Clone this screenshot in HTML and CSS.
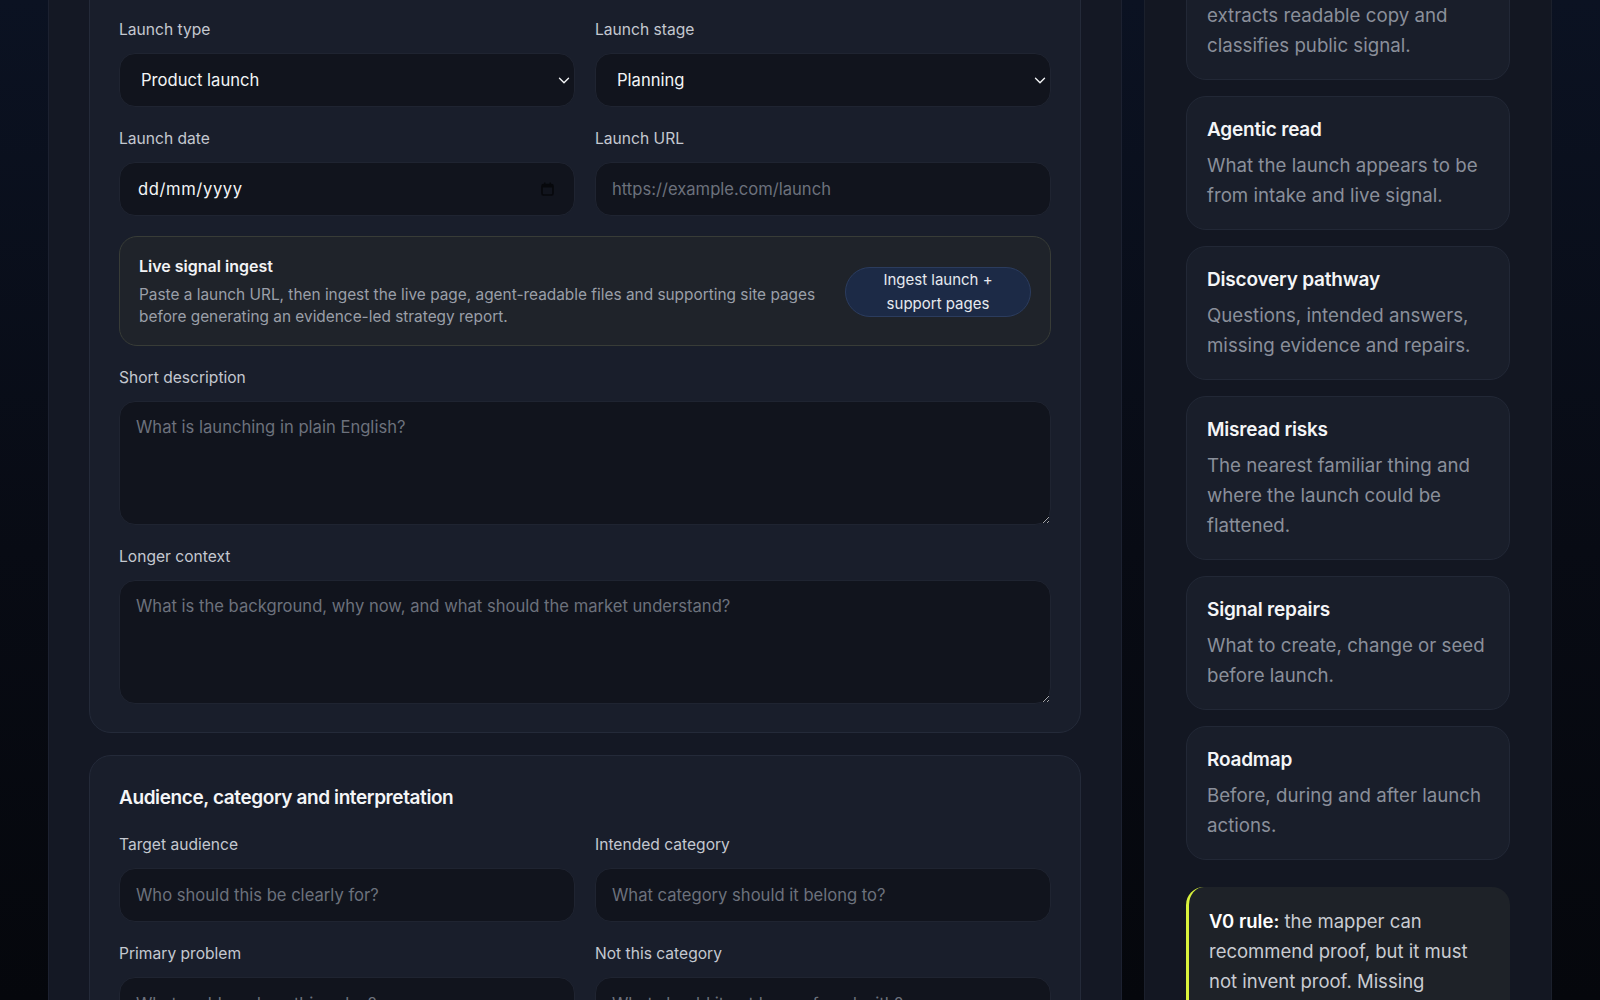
FILE: index.html
```html
<!DOCTYPE html>
<html lang="en">
<head>
  <meta charset="UTF-8">
  <meta name="viewport" content="width=device-width, initial-scale=1.0">
  <title>Launch Signal Mapper</title>
  <link rel="stylesheet" href="styles.css">
</head>
<body>
  <div class="shell">
    <main class="main-panel">
      <!-- Launch basics -->
      <section class="card">
        <h2 class="card-title">Launch basics</h2>
        <div class="form-grid">
          <div class="field">
            <label for="launchType">Launch type</label>
            <div class="select-wrap">
              <select id="launchType" class="control">
                <option>Product launch</option>
                <option>Feature launch</option>
                <option>Company launch</option>
              </select>
              <svg class="chevron" width="12" height="7" viewBox="0 0 12 7"><path d="M1.5 1.2l4.5 4.5 4.5-4.5" fill="none" stroke="#f3f4f6" stroke-width="1.4" stroke-linecap="round" stroke-linejoin="round"/></svg>
            </div>
          </div>
          <div class="field">
            <label for="launchStage">Launch stage</label>
            <div class="select-wrap">
              <select id="launchStage" class="control">
                <option>Planning</option>
                <option>Pre-launch</option>
                <option>Live</option>
              </select>
              <svg class="chevron" width="12" height="7" viewBox="0 0 12 7"><path d="M1.5 1.2l4.5 4.5 4.5-4.5" fill="none" stroke="#f3f4f6" stroke-width="1.4" stroke-linecap="round" stroke-linejoin="round"/></svg>
            </div>
          </div>
          <div class="field">
            <label for="launchDate">Launch date</label>
            <div class="select-wrap">
              <input id="launchDate" class="control date" type="text" value="dd/mm/yyyy">
              <svg class="calendar" width="13" height="14" viewBox="0 0 13 14"><rect x="1" y="2.5" width="11" height="10.5" rx="1.5" fill="none" stroke="#07080c" stroke-width="1.6"/><rect x="1" y="2.5" width="11" height="3" fill="#07080c"/><rect x="3" y="0.5" width="1.5" height="3" fill="#07080c"/><rect x="8.5" y="0.5" width="1.5" height="3" fill="#07080c"/></svg>
            </div>
          </div>
          <div class="field">
            <label for="launchUrl">Launch URL</label>
            <input id="launchUrl" class="control" type="url" placeholder="https://example.com/launch">
          </div>
        </div>

        <div class="ingest">
          <div class="ingest-text">
            <h3>Live signal ingest</h3>
            <p>Paste a launch URL, then ingest the live page, agent-readable files and supporting site pages before generating an evidence-led strategy report.</p>
          </div>
          <button class="ingest-btn">Ingest launch + support pages</button>
        </div>

        <div class="field">
          <label for="shortDesc">Short description</label>
          <textarea id="shortDesc" class="control" placeholder="What is launching in plain English?"></textarea>
        </div>
        <div class="field">
          <label for="longContext">Longer context</label>
          <textarea id="longContext" class="control" placeholder="What is the background, why now, and what should the market understand?"></textarea>
        </div>
      </section>

      <!-- Audience -->
      <section class="card">
        <h2 class="card-title">Audience, category and interpretation</h2>
        <div class="form-grid">
          <div class="field">
            <label for="audience">Target audience</label>
            <input id="audience" class="control" type="text" placeholder="Who should this be clearly for?">
          </div>
          <div class="field">
            <label for="category">Intended category</label>
            <input id="category" class="control" type="text" placeholder="What category should it belong to?">
          </div>
          <div class="field">
            <label for="problem">Primary problem</label>
            <input id="problem" class="control" type="text" placeholder="What problem does this solve?">
          </div>
          <div class="field">
            <label for="notCategory">Not this category</label>
            <input id="notCategory" class="control" type="text" placeholder="What should it not be confused with?">
          </div>
        </div>
      </section>
    </main>

    <aside class="side-panel">
      <div class="step-card">
        <h3>Live signal</h3>
        <p>Ingests the live launch page, extracts readable copy and classifies public signal.</p>
      </div>
      <div class="step-card">
        <h3>Agentic read</h3>
        <p>What the launch appears to be from intake and live signal.</p>
      </div>
      <div class="step-card">
        <h3>Discovery pathway</h3>
        <p>Questions, intended answers, missing evidence and repairs.</p>
      </div>
      <div class="step-card">
        <h3>Misread risks</h3>
        <p>The nearest familiar thing and where the launch could be flattened.</p>
      </div>
      <div class="step-card">
        <h3>Signal repairs</h3>
        <p>What to create, change or seed before launch.</p>
      </div>
      <div class="step-card">
        <h3>Roadmap</h3>
        <p>Before, during and after launch actions.</p>
      </div>
      <p class="rule-note"><strong>V0 rule:</strong> the mapper can recommend proof, but it must not invent proof. Missing evidence stays marked as a gap.</p>
    </aside>
  </div>
</body>
</html>
```

FILE: styles.css
```css
/* Page layout */
* {
  box-sizing: border-box;
}

html, body {
  height: 100%;
}

body {
  margin: 0;
  overflow: hidden;
  background: linear-gradient(180deg, #0b1222 0%, #080b14 55%, #05070c 100%);
  font-family: Inter, "Noto Sans", sans-serif;
  color: #e8eaee;
}

.shell {
  display: grid;
  grid-template-columns: 1074px 408px;
  column-gap: 22px;
  padding: 0 48px;
  margin-top: -100px;
  min-height: 1140px;
}

/* Main column */
.main-panel {
  background-color: #141824;
  border-left: 1px solid #1c2130;
  border-right: 1px solid #1c2130;
  padding: 40px;
  display: flex;
  flex-direction: column;
  gap: 22px;
}

.card {
  background-color: #191e2b;
  border: 1px solid #242a39;
  border-radius: 22px;
  padding: 28px 29px;
  display: flex;
  flex-direction: column;
  gap: 20px;
}

.card-title {
  margin: 1px 0 2px;
  font-size: 19px;
  line-height: 26px;
  font-weight: 600;
  letter-spacing: -0.4px;
  color: #f4f5f7;
}

.form-grid {
  display: grid;
  grid-template-columns: 1fr 1fr;
  gap: 20px;
}

.field label {
  display: block;
  font-size: 15.6px;
  line-height: 22px;
  color: #c4c8d0;
  margin: 1px 0 12px;
}

/* Inputs */
.control {
  display: block;
  width: 100%;
  height: 54px;
  background-color: #11141d;
  border: 1px solid #1f2431;
  border-radius: 16px;
  color: #f3f4f6;
  font-family: Inter, "Noto Sans", sans-serif;
  font-size: 16.6px;
  padding: 0 16px;
  outline: none;
}

.control::placeholder {
  color: #6c717c;
}

select.control {
  appearance: none;
  -webkit-appearance: none;
  padding-left: 21px;
}

.control.date {
  padding-left: 18px;
  letter-spacing: 0.6px;
}

textarea.control {
  height: 124px;
  padding: 14px 16px;
  line-height: 22px;
  resize: vertical;
}

.select-wrap {
  position: relative;
}

.chevron {
  position: absolute;
  right: 5px;
  top: 24px;
}

.calendar {
  position: absolute;
  right: 21px;
  top: 20px;
}

/* Live signal box */
.ingest {
  display: flex;
  align-items: center;
  gap: 24px;
  background-color: #1f232a;
  border: 1px solid #383c37;
  border-radius: 18px;
  padding: 18px 19px 17px;
}

.ingest-text {
  flex: 1;
}

.ingest h3 {
  margin: 0 0 7px;
  font-size: 16px;
  line-height: 22px;
  font-weight: 600;
  color: #f2f3f5;
}

.ingest p {
  margin: 0;
  font-size: 15.4px;
  line-height: 22px;
  color: #9a9fa8;
}

.ingest-btn {
  flex-shrink: 0;
  width: 186px;
  height: 50px;
  padding: 0 22px;
  border-radius: 999px;
  background-color: #1c2a46;
  border: 1px solid #2b3c5e;
  color: #e6e9ef;
  font-family: Inter, "Noto Sans", sans-serif;
  font-size: 15px;
  line-height: 24px;
  cursor: pointer;
}

/* Sidebar */
.side-panel {
  background-color: #131722;
  border-left: 1px solid #1b202c;
  border-right: 1px solid #1b202c;
  padding: 16px 41px 40px;
  display: flex;
  flex-direction: column;
  gap: 16px;
}

.step-card {
  background-color: #191e2a;
  border: 1px solid #222836;
  border-radius: 20px;
  padding: 21px 14px 18px 20px;
}

.step-card h3 {
  margin: 0 0 9px;
  font-size: 19px;
  line-height: 24px;
  font-weight: 600;
  letter-spacing: -0.2px;
  color: #f4f5f7;
}

.step-card p {
  margin: 0;
  font-size: 18.7px;
  line-height: 30px;
  color: #8a8f9a;
}

.rule-note {
  margin: 11px 0 0;
  background-color: #1e2228;
  border-left: 3px solid #d9f23c;
  border-radius: 18px;
  padding: 19px 20px;
  font-size: 18.5px;
  line-height: 30px;
  color: #c9ccd2;
}

.rule-note strong {
  color: #ffffff;
  font-weight: 600;
}
```
